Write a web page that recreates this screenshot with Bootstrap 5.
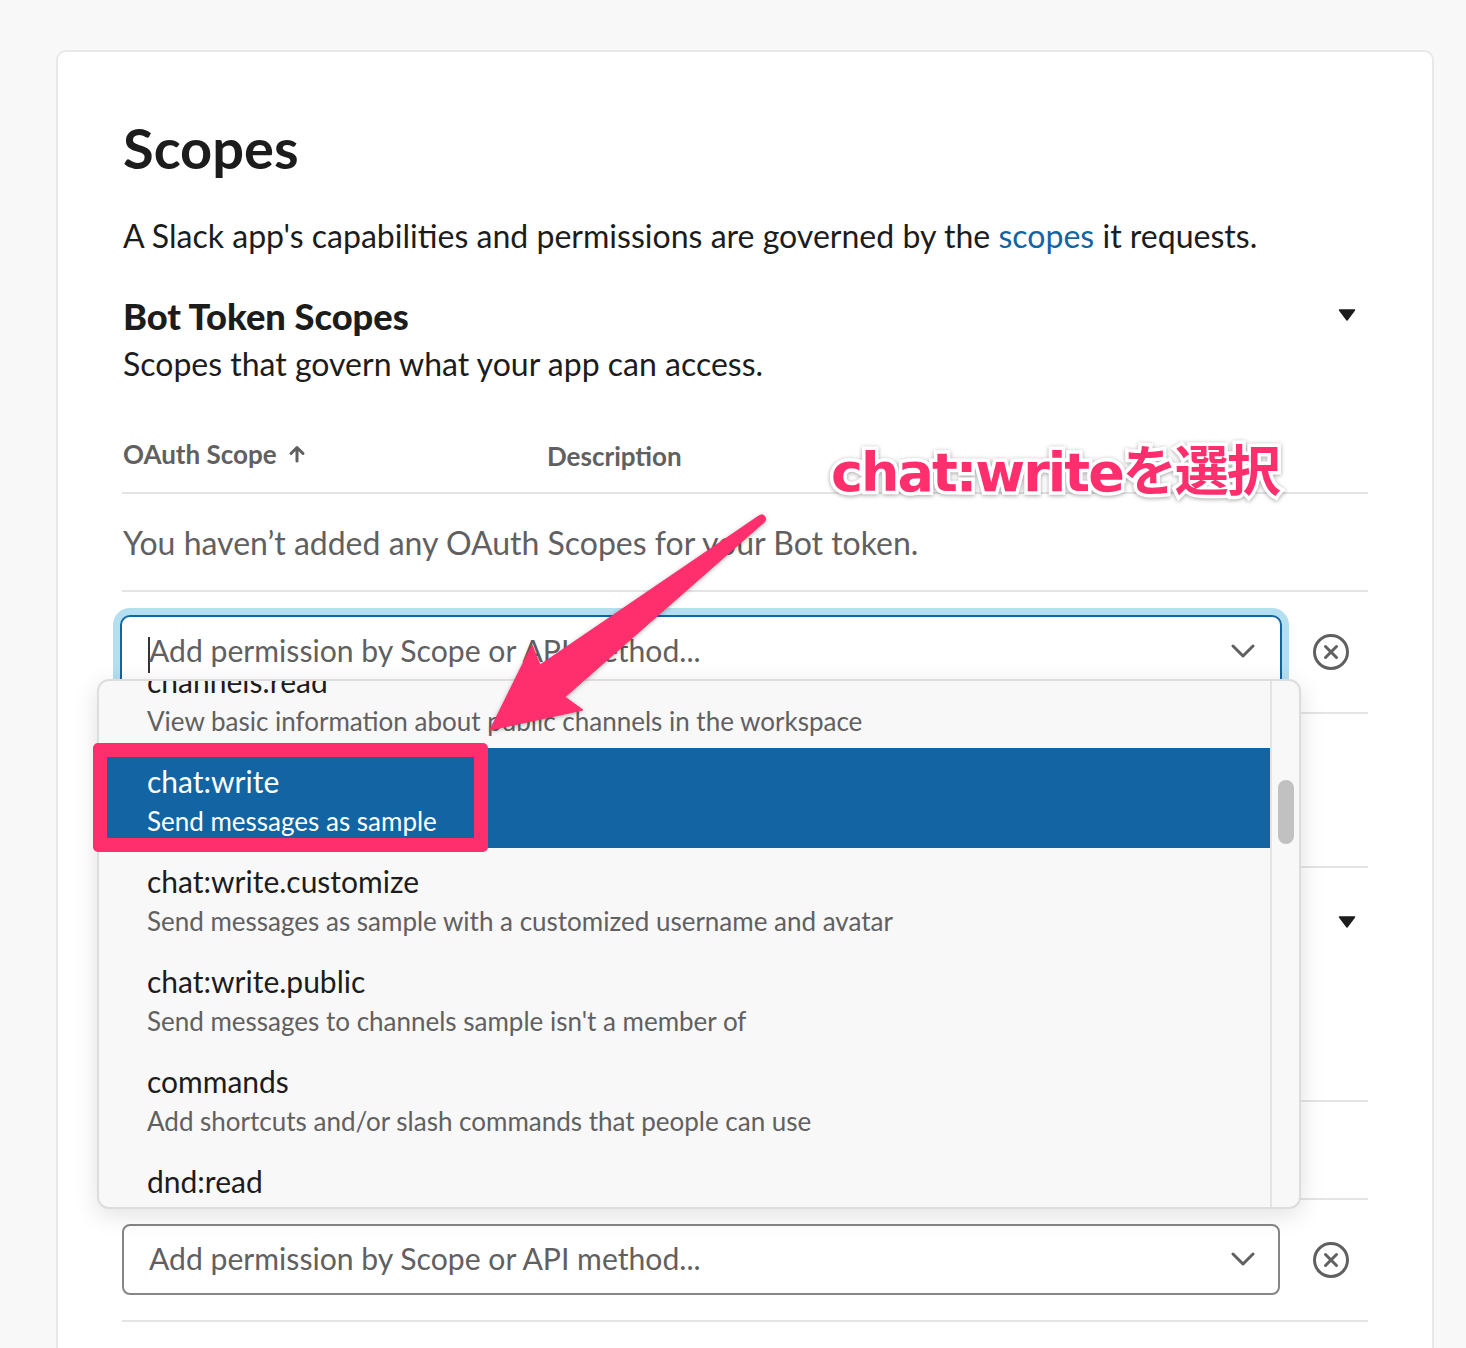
<!DOCTYPE html>
<html lang="en"><head><meta charset="utf-8"><title>Scopes</title>
<link href="https://cdn.jsdelivr.net/npm/bootstrap@5.3.0/dist/css/bootstrap.min.css" rel="stylesheet">
<style>
html,body{height:1348px;overflow:hidden}
body{background:#f8f8f8;font-family:Lato,"Liberation Sans",sans-serif;color:#1d1c1d;font-feature-settings:"liga" 1}
.stage{position:relative;width:1466px;height:1348px;overflow:hidden;padding:50px 32px 0 56px}
.sheet{background:#fff;border:2px solid #e8e8e8;border-bottom:0;border-radius:10px 10px 0 0;height:1400px;padding:64px 64px 0 64px}
.ttl{font-size:56px;line-height:64px;font-weight:700;margin:0 0 0 1px}
.lede{font-size:32.05px;line-height:40px;margin:36px 0 0 1px}
.lede a{color:#1264a3;text-decoration:none}
.sect{margin:38px 0 0 1px;font-size:36.25px;line-height:44px;font-weight:900}
.sub{font-size:32px;line-height:40px;margin:6px 0 0 1px}
.thead{height:110px;border-bottom:2px solid #e4e4e4;padding-bottom:20px;color:#616061;font-size:26px;line-height:36px;font-weight:700}
.thead>.c1{width:425px;padding-left:1px;gap:11px}
.thead>.c2{margin-bottom:-2px}
.empty{height:98px;border-bottom:2px solid #e4e4e4;font-size:32px;color:#616061;padding:2px 0 0 1px}
.irow{padding:25px 0 25px;border-bottom:2px solid #e4e4e4}
.irow.second{padding:24px 0 25px}
.fake{height:70px;flex:1;border:2px solid #868686;border-radius:8px;padding:0 23px 2px 25px;font-size:30.15px;color:#616061;background:#fff}
.irow.second .fake{height:71px}
.fake.on{border-color:#fff;box-shadow:0 0 0 2px #1264a3,0 0 0 9px #b3dff0;padding-left:24px}
.caret-bar{display:inline-block;width:2px;height:36px;background:#333;margin-right:-1px}
.xic{margin:0 19px 0 33px;flex:none}
.sp1{height:154px;border-bottom:2px solid #e4e4e4}
.sp2{height:234px;border-bottom:2px solid #e4e4e4;padding:48px 12px 0 0}
.sp3{height:98px;border-bottom:2px solid #e4e4e4}
.toptri{position:absolute;left:1338px;top:309px}
.drop{position:absolute;left:97px;top:679px;width:1204px;height:530px;background:#f8f8f8;border:2px solid #ddd;border-radius:12px;box-shadow:0 6px 24px rgba(0,0,0,.12);overflow:hidden}
.opts{width:1171px;flex:none;overflow:hidden}
.opt{height:100px;padding:15px 0 0 48px;font-size:30px;line-height:36px;flex:none}
.opt:first-child{margin-top:-33px}
.opt small{display:block;font-size:26px;line-height:40px;color:#616061;margin-top:2px}
.opt.act{background:#1264a3;color:#fff}
.opt.act small{color:#fff}
.sbar{width:29px;flex:none;border-left:2px solid #e4e4e4;padding:99px 0 0 6px}
.thumb{width:16px;height:64px;border-radius:8px;background:#c1c1c1}
.mark-box{position:absolute;left:93px;top:743px;width:395px;height:109px;border:14px solid #fe2f6c;border-radius:5px}
.arrow{position:absolute;left:0;top:0;pointer-events:none;filter:drop-shadow(0 1px 2px rgba(0,0,0,.3))}
.note{position:absolute;left:831px;top:438px;font-family:"DejaVu Sans","Noto Sans CJK JP",sans-serif;font-weight:700;font-size:54px;line-height:70px;letter-spacing:-2px;color:#fe2f6c;-webkit-text-stroke:7px #fff;paint-order:stroke fill;white-space:nowrap;filter:drop-shadow(0 1px 2px rgba(0,0,0,.35))}
</style></head>
<body>
<div class="stage">
 <div class="sheet">
  <h1 class="ttl">Scopes</h1>
  <p class="lede">A Slack app's capabilities and permissions are governed by the <a href="#">scopes</a> it requests.</p>
  <h2 class="sect">Bot Token Scopes</h2>
  <p class="sub">Scopes that govern what your app can access.</p>
  <div class="thead d-flex align-items-end">
   <div class="c1 d-flex align-items-center">OAuth Scope <svg width="18" height="18" viewBox="0 0 18 18" fill="none" stroke="#616061" stroke-width="3" stroke-linecap="round" stroke-linejoin="round"><path d="M9 16V3M3 8.500 9 2.500 15 8.500"/></svg></div>
   <div class="c2">Description</div>
  </div>
  <div class="empty d-flex align-items-center">You haven’t added any OAuth Scopes for your Bot token.</div>
  <div class="irow d-flex align-items-center">
   <div class="fake on d-flex align-items-center justify-content-between"><span><span class="caret-bar align-middle"></span>Add permission by Scope or API method...</span><svg width="24" height="14" viewBox="0 0 24 14" fill="none" stroke="#616061" stroke-width="3" stroke-linecap="round" stroke-linejoin="round"><path d="M2 2l10 10L22 2"/></svg></div>
   <svg class="xic" width="36" height="36" viewBox="0 0 36 36" fill="none" stroke="#616061" stroke-width="3" stroke-linecap="round"><circle cx="18" cy="18" r="16.500"/><path d="M12.500 12.500l11 11M23.500 12.500l-11 11"/></svg>
  </div>
  <div class="sp1"></div>
  <div class="sp2 d-flex justify-content-end"><svg width="18" height="12" viewBox="0 0 18 12"><path d="M1.500 1h15L9 11z" fill="#1d1c1d" stroke="#1d1c1d" stroke-width="1.500" stroke-linejoin="round"/></svg></div>
  <div class="sp3"></div>
  <div class="irow second d-flex align-items-center">
   <div class="fake d-flex align-items-center justify-content-between"><span>Add permission by Scope or API method...</span><svg width="24" height="14" viewBox="0 0 24 14" fill="none" stroke="#616061" stroke-width="3" stroke-linecap="round" stroke-linejoin="round"><path d="M2 2l10 10L22 2"/></svg></div>
   <svg class="xic" width="36" height="36" viewBox="0 0 36 36" fill="none" stroke="#616061" stroke-width="3" stroke-linecap="round"><circle cx="18" cy="18" r="16.500"/><path d="M12.500 12.500l11 11M23.500 12.500l-11 11"/></svg>
  </div>
 </div>
 <svg class="toptri" width="18" height="12" viewBox="0 0 18 12"><path d="M1.500 1h15L9 11z" fill="#1d1c1d" stroke="#1d1c1d" stroke-width="1.500" stroke-linejoin="round"/></svg>
 <div class="drop d-flex">
  <div class="opts d-flex flex-column">
   <div class="opt">channels:read<small>View basic information about public channels in the workspace</small></div>
   <div class="opt act">chat:write<small>Send messages as sample</small></div>
   <div class="opt">chat:write.customize<small>Send messages as sample with a customized username and avatar</small></div>
   <div class="opt">chat:write.public<small>Send messages to channels sample isn't a member of</small></div>
   <div class="opt">commands<small>Add shortcuts and/or slash commands that people can use</small></div>
   <div class="opt">dnd:read<small>View Do Not Disturb settings for people in the workspace</small></div>
  </div>
  <div class="sbar"><div class="thumb"></div></div>
 </div>
 <div class="mark-box"></div>
 <svg class="arrow" width="1466" height="1348" viewBox="0 0 1466 1348"><path d="M758 516.500Q763 513 765 517Q767 521 762 524L565 697L583 710L490 730L532 645L540 665Z" fill="#fe2f6c" stroke="#fe2f6c" stroke-width="1" stroke-linejoin="round"/></svg>
 <div class="note">chat:writeを選択</div>
</div>
<script src="https://cdn.jsdelivr.net/npm/bootstrap@5.3.0/dist/js/bootstrap.bundle.min.js"></script>
</body></html>
